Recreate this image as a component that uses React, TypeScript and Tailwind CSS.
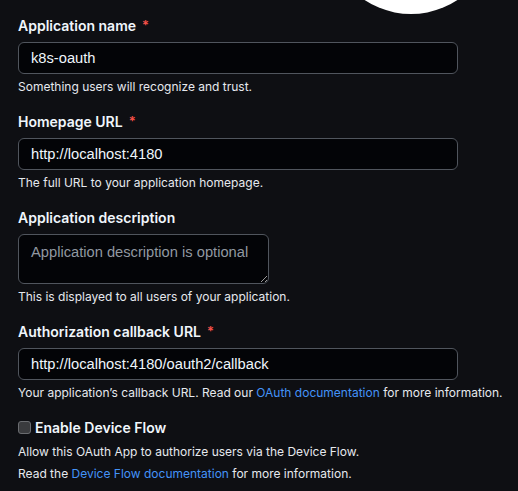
import React from 'react';

const Label = ({ text, required }: { text: string; required?: boolean }) => (
  <div className="h-[21px] mb-[6px] flex items-center text-[14px] font-semibold text-[#f0f6fc]">
    {text}
    {required && <span className="ml-[6px] text-[#f85149] text-[13px]">*</span>}
  </div>
);

const Note = ({ children }: { children: React.ReactNode }) => (
  <p className="mt-1 text-[12px] leading-[18px] whitespace-nowrap text-[#e6e9ee]">{children}</p>
);

const inputCls =
  'w-[440px] h-8 px-3 rounded-md border border-[#50555d] bg-[#030407] font-["Liberation_Sans",Arial,sans-serif] text-[14.7px] text-[#f0f6fc] outline-none';

const App = () => {
  return (
    <div
      className="relative w-[518px] h-[491px] overflow-hidden bg-[#0e0f13] px-[18px] pt-[15px]"
      style={{ fontFamily: 'Inter, "Noto Sans", sans-serif' }}
    >
      {/* avatar peeking in from the top */}
      <div className="absolute left-[327px] top-[-154px] w-[168px] h-[168px] rounded-full bg-white" />

      <div className="flex flex-col gap-[15px]">
        <div>
          <Label text="Application name" required />
          <input className={inputCls} defaultValue="k8s-oauth" />
          <Note>Something users will recognize and trust.</Note>
        </div>

        <div>
          <Label text="Homepage URL" required />
          <input className={inputCls} defaultValue="http://localhost:4180" />
          <Note>The full URL to your application homepage.</Note>
        </div>

        <div>
          <Label text="Application description" />
          <textarea
            className='block w-[251px] h-[50px] px-3 py-[7px] rounded-md border border-[#50555d] bg-[#030407] font-["Liberation_Sans",Arial,sans-serif] text-[14.7px] leading-[21px] text-[#f0f6fc] placeholder-[#9198a1] outline-none'
            placeholder="Application description is optional"
          />
          <Note>This is displayed to all users of your application.</Note>
        </div>

        <div>
          <Label text="Authorization callback URL" required />
          <input className={inputCls} defaultValue="http://localhost:4180/oauth2/callback" />
          <Note>
            Your application’s callback URL. Read our{' '}
            <a className="text-[#4493f8]">OAuth documentation</a> for more information.
          </Note>
        </div>

        <div>
          <div className="h-[21px] flex items-center gap-1 text-[14px] font-semibold text-[#f0f6fc]">
            <span className="w-[13px] h-[13px] rounded-[3px] bg-[#3a3b3e] border border-[#6a6c70]" />
            Enable Device Flow
          </div>
          <p className="mt-[5px] text-[12px] leading-[18px] text-[#e6e9ee]">
            Allow this OAuth App to authorize users via the Device Flow.
          </p>
          <Note>
            Read the <a className="text-[#4493f8]">Device Flow documentation</a> for more
            information.
          </Note>
        </div>
      </div>
    </div>
  );
};

export default App;
